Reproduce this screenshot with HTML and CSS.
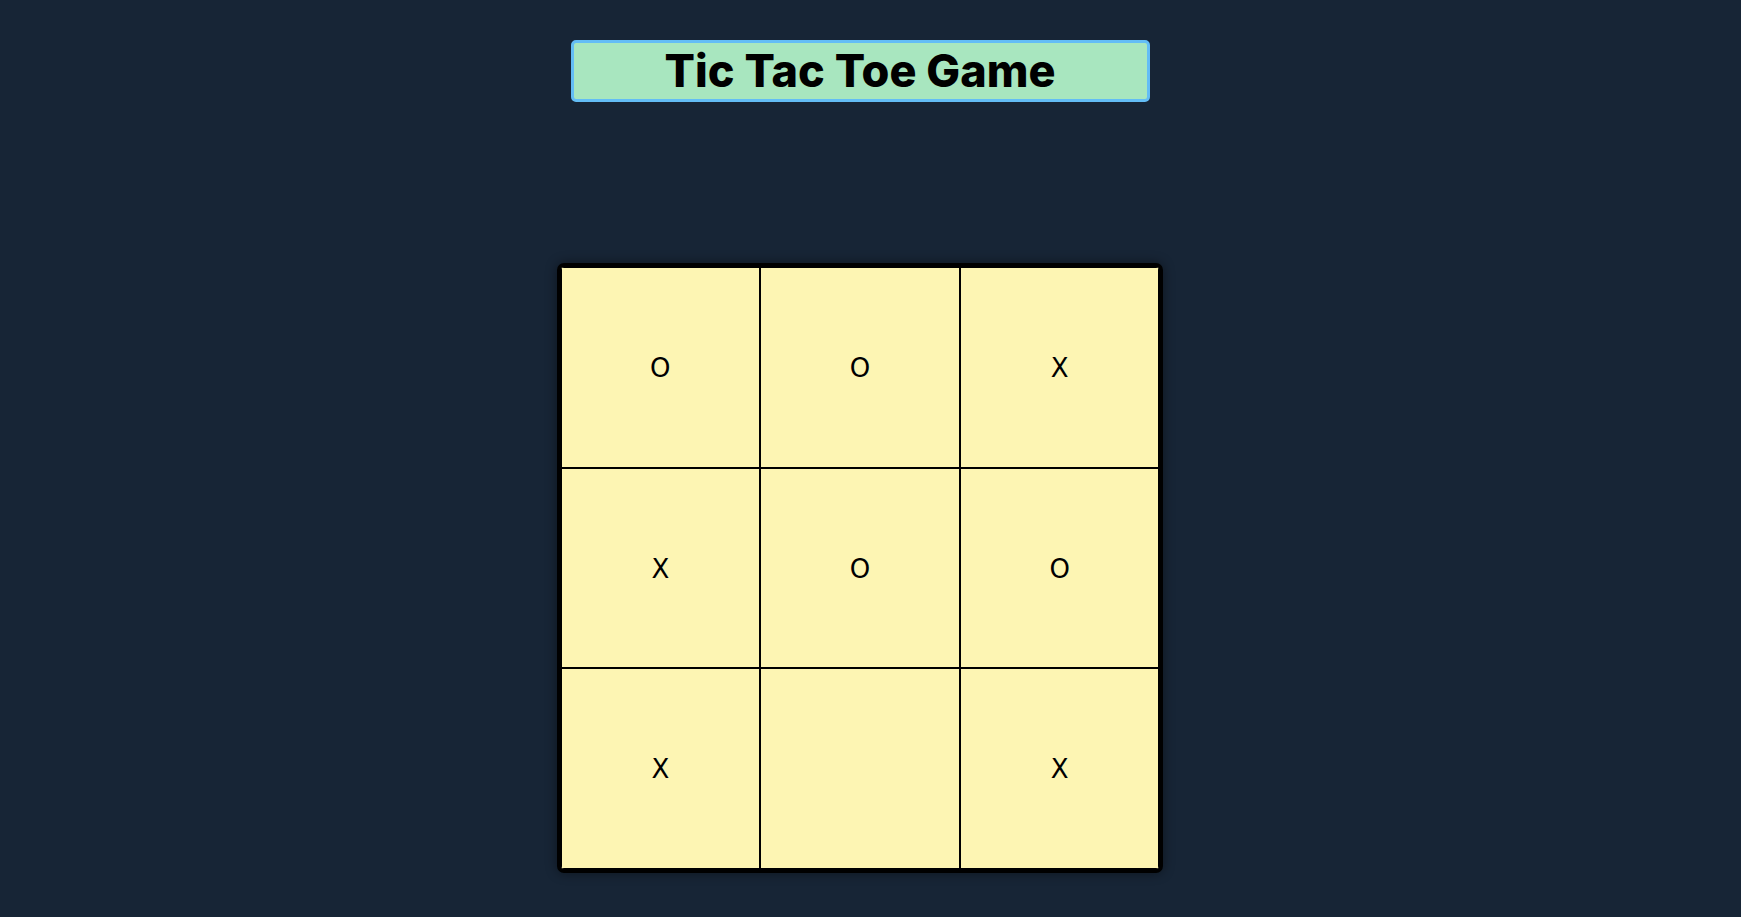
FILE: index.html
```html
<!DOCTYPE html>
<html>
<head>
<meta charset="utf-8">
<title>Tic Tac Toe Game</title>
<link rel="stylesheet" href="styles.css">
</head>
<body>
<main class="page">
  <h1 class="title">Tic Tac Toe Game</h1>
  <div class="board">
    <div class="cell">O</div>
    <div class="cell">O</div>
    <div class="cell">X</div>
    <div class="cell">X</div>
    <div class="cell">O</div>
    <div class="cell">O</div>
    <div class="cell">X</div>
    <div class="cell"></div>
    <div class="cell">X</div>
  </div>
</main>
</body>
</html>
```
FILE: styles.css
```css
html, body {
  margin: 0;
  padding: 0;
  background: #172536;
  height: 100%;
}
.page {
  display: flex;
  flex-direction: column;
  align-items: center;
  padding-top: 40px;
  padding-right: 21px;
}
.title {
  box-sizing: border-box;
  width: 579px;
  height: 62px;
  margin: 0;
  background: #a8e6bf;
  border: 3px solid #63bdf5;
  border-radius: 5px;
  color: #000;
  font-family: "Inter", "DejaVu Sans", sans-serif;
  font-weight: 800;
  font-size: 45px;
  line-height: 55px;
  text-align: center;
}
.board {
  margin-top: 161px;
  display: grid;
  grid-template-columns: repeat(3, 199.67px);
  grid-template-rows: repeat(3, 200.5px);
  border: 4px solid #000;
  border-radius: 7px;
  background: #fdf5b3;
  overflow: hidden;
  box-shadow: 0 0 12px rgba(0, 0, 0, 0.45);
}
.cell {
  border: 1px solid #000;
  display: flex;
  align-items: center;
  justify-content: center;
  padding-top: 2px;
  font-family: "DejaVu Sans", sans-serif;
  font-size: 26px;
  color: #000;
}
```
